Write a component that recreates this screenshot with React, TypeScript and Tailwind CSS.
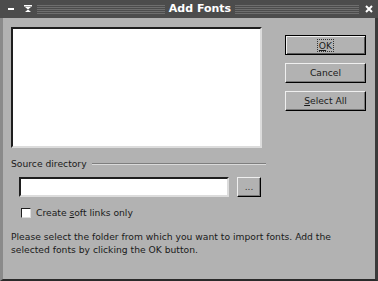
import React from 'react';

const font = { fontFamily: '"DejaVu Sans", sans-serif' };

function Stripes({ className }: { className: string }) {
  return (
    <div className={`flex flex-col gap-px ${className}`}>
      <div className="h-px bg-[#6e6e6e]" />
      <div className="h-px bg-[#6e6e6e]" />
      <div className="h-px bg-[#6e6e6e]" />
      <div className="h-px bg-[#6e6e6e]" />
      <div className="h-px bg-[#6e6e6e]" />
    </div>
  );
}

function Button({ children, isDefault }: { children: React.ReactNode; isDefault?: boolean }) {
  return (
    <div
      className={`h-[20px] w-[81px] flex items-center justify-center text-[9.2px] text-[#1a1a1a] ${
        isDefault
          ? 'border border-black shadow-[inset_1px_1px_0_#efefef,inset_-1px_-1px_0_#5a5a5a]'
          : 'border border-t-[#efefef] border-l-[#efefef] border-b-black border-r-black shadow-[inset_-1px_-1px_0_#7a7a7a]'
      }`}
    >
      {children}
    </div>
  );
}

export default function App() {
  return (
    <div className="w-[378px] h-[281px] bg-[#b2b2b2] flex flex-col overflow-hidden" style={font}>
      <div className="h-[18px] bg-[#4c4c4c] flex items-center text-white shrink-0">
        <div className="w-[6px] h-[2px] bg-white ml-[8px]" />
        <svg width="8" height="8" viewBox="0 0 8 8" className="ml-[10px]">
          <rect x="0" y="0" width="8" height="1.5" fill="#fff" />
          <path d="M1 2 L7 2 L4 4.5 Z" fill="#fff" />
          <path d="M1 7 L7 7 L4 4.5 Z" fill="#fff" />
        </svg>
        <Stripes className="ml-[5px] w-[128px]" />
        <div className="w-[70px] text-center text-[11px] font-bold">Add Fonts</div>
        <Stripes className="w-[124px]" />
        <svg width="8" height="8" viewBox="0 0 8 8" className="ml-[6px]">
          <path d="M1 1 L7 7 M7 1 L1 7" stroke="#fff" strokeWidth="2" />
        </svg>
      </div>
      <div className="flex-1 flex flex-col border-l-[3px] border-r-[3px] border-b-[2px] border-l-[#8a8a8a] border-r-[#3a3a3a] border-b-[#2a2a2a] pl-[8px] pr-[6px]">
        <div className="flex mt-[9px]">
          <div className="w-[251px] h-[121px] bg-white border-2 border-t-[#1e1e1e] border-l-[#1e1e1e] border-b-[#dcdcdc] border-r-[#dcdcdc]" />
          <div className="flex flex-col gap-[8px] ml-[23px] mt-[8px]">
            <Button isDefault>
              <span className="border border-dotted border-[#333] px-[1px] leading-[11px]">
                <u>O</u>K
              </span>
            </Button>
            <Button>Cancel</Button>
            <Button>
              <span>
                <u>S</u>elect All
              </span>
            </Button>
          </div>
        </div>
        <div className="flex items-center mt-[10px] h-[12px]">
          <span className="text-[9.2px] text-[#1a1a1a]">Source directory</span>
          <div className="flex-1 ml-[5px] mr-[103px] border-t border-t-[#7e7e7e] border-b border-b-[#dadada]" />
        </div>
        <div className="flex items-center mt-[7px] ml-[8px]">
          <div className="w-[210px] h-[20px] bg-white border-2 border-t-[#1e1e1e] border-l-[#1e1e1e] border-b-[#dcdcdc] border-r-[#dcdcdc]" />
          <div className="ml-[8px] w-[24px] h-[20px] flex items-center justify-center border border-t-[#efefef] border-l-[#efefef] border-b-black border-r-black shadow-[inset_-1px_-1px_0_#7a7a7a] text-[9px] leading-none text-[#333]">
            ...
          </div>
        </div>
        <div className="flex items-center mt-[9px] ml-[10px]">
          <div className="w-[10px] h-[10px] bg-white border border-t-[#1e1e1e] border-l-[#1e1e1e] border-b-[#dcdcdc] border-r-[#dcdcdc]" />
          <span className="ml-[5px] text-[9.2px] text-[#1a1a1a]">
            Create <u>s</u>oft links only
          </span>
        </div>
        <p className="mt-[10px] text-[9.2px] leading-[13px] text-[#1a1a1a]">
          Please select the folder from which you want to import fonts. Add the
          <br />
          selected fonts by clicking the OK button.
        </p>
      </div>
    </div>
  );
}
